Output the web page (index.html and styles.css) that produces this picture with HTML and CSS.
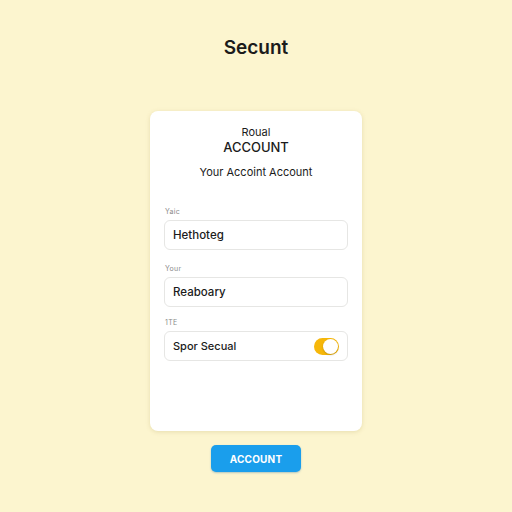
FILE: index.html
```html
<!DOCTYPE html>
<html lang="en">
<head>
    <meta charset="UTF-8">
    <title>Secunt</title>
    <link rel="stylesheet" href="styles.css">
</head>
<body>
<div class="page">
    <h1 class="title">Secunt</h1>
    <div class="card">
        <p class="kicker">Roual</p>
        <h2 class="head">ACCOUNT</h2>
        <p class="sub">Your Accoint Account</p>

        <label class="lbl">Yaic</label>
        <div class="field">Hethoteg</div>

        <label class="lbl">Your</label>
        <div class="field">Reaboary</div>

        <label class="lbl last">1TE</label>
        <div class="field row">
            <span>Spor Secual</span>
            <span class="toggle"><i></i></span>
        </div>
    </div>
    <button class="btn">ACCOUNT</button>
</div>
</body>
</html>
```

FILE: styles.css
```css
html,body{margin: 0;padding: 0;}
body{background: #fcf5cf;font-family: "Inter","Liberation Sans",sans-serif;color: #1b1b1b;}
.page{width: 512px;height: 512px;display: flex;flex-direction: column;align-items: center;}

.title{font-size: 19px;font-weight: 600;margin: 37px 0 0;height: 22px;line-height: 22px;}

.card{width: 212px;height: 320px;box-sizing: border-box;margin-top: 52px;background: #fff;border-radius: 8px;box-shadow: 0 1px 4px rgba(170,150,80,.25);padding: 15px 14px 0;display: flex;flex-direction: column;}
.kicker{margin: 0;text-align: center;font-size: 11px;line-height: 13px;}
.head{margin: 1px 0 0;text-align: center;font-size: 13px;font-weight: 500;line-height: 15px;}
.sub{margin: 11px 0 0;text-align: center;font-size: 11px;line-height: 13px;}

.lbl{font-size: 7px;color: #8a8a8a;letter-spacing: .3px;margin: 28px 0 0 1px;line-height: 9px;}
.lbl ~ .lbl{margin-top: 14px;}
.lbl.last{margin-top: 11px;}
.field{margin-top: 4px;height: 30px;box-sizing: border-box;border: 1px solid #e6e6e4;border-radius: 6px;padding: 0 8px;font-size: 11.5px;line-height: 28px;font-weight: 500;}
.row{display: flex;align-items: center;justify-content: space-between;font-size: 11px;}
.toggle{width: 25px;height: 17px;border-radius: 9px;background: #f6b70a;position: relative;}
.toggle i{position: absolute;right: 1px;top: 1px;width: 15px;height: 15px;border-radius: 50%;background: #fff;box-shadow: 0 1px 2px rgba(0,0,0,.2);}

.btn{margin-top: 14px;width: 90px;height: 27px;border: none;border-radius: 5px;background: #1a9eec;color: #fff;font-family: inherit;font-size: 10px;font-weight: 700;letter-spacing: .2px;box-shadow: 0 1px 2px rgba(0,90,160,.3);}
```
